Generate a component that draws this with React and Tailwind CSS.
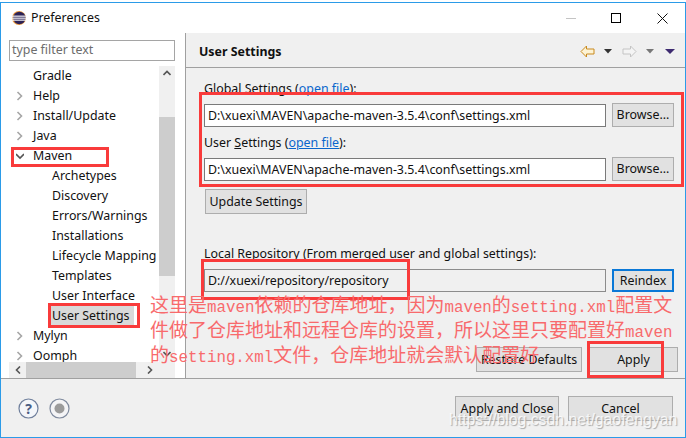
import React from 'react';

const treeTop = [
  { label: 'Gradle', kind: 'none' },
  { label: 'Help', kind: 'closed' },
  { label: 'Install/Update', kind: 'closed' },
  { label: 'Java', kind: 'closed' },
  { label: 'Maven', kind: 'open' },
  { label: 'Archetypes', kind: 'child' },
  { label: 'Discovery', kind: 'child' },
  { label: 'Errors/Warnings', kind: 'child' },
  { label: 'Installations', kind: 'child' },
  { label: 'Lifecycle Mapping', kind: 'child' },
  { label: 'Templates', kind: 'child' },
  { label: 'User Interface', kind: 'child' },
  { label: 'User Settings', kind: 'selected' },
  { label: 'Mylyn', kind: 'closed' },
  { label: 'Oomph', kind: 'closed' },
];

function Chevron({ open }) {
  return (
    <svg width="8" height="10" viewBox="0 0 8 10" className="shrink-0" fill="none">
      {open ? (
        <path d="M0 3l4 4 4-4" stroke="#555" strokeWidth="1.6" />
      ) : (
        <path d="M1.5 1l4 4-4 4" stroke="#a6a6a6" strokeWidth="1.6" />
      )}
    </svg>
  );
}

function TreeRow({ label, kind }) {
  if (kind === 'child' || kind === 'selected') {
    return (
      <div className="h-5 shrink-0 flex items-start pl-[41px]">
        <span className={`h-[19px] leading-[19px] pl-[2px] pr-[5px] whitespace-nowrap ${kind === 'selected' ? 'bg-[#d9d9d9]' : ''}`}>{label}</span>
      </div>
    );
  }
  return (
    <div className="h-5 shrink-0 flex items-center pl-[7px]">
      <span className="w-[16px] flex">{kind !== 'none' && <Chevron open={kind === 'open'} />}</span>
      <span className="pl-[1px] whitespace-nowrap">{label}</span>
    </div>
  );
}

function Btn({ children, className = 'border-[#adadad]' }) {
  return (
    <div className={`flex items-center justify-center pt-px bg-[#e1e1e1] border shrink-0 ${className}`}>{children}</div>
  );
}

function PathField({ value, className = 'bg-white border-[#7a7a7a]' }) {
  return (
    <div className={`h-[23px] flex-1 border pl-[3px] pt-px flex items-center ${className}`}>{value}</div>
  );
}

function Link() {
  return <span className="text-[#0a66cc] underline">open file</span>;
}

function EclipseIcon() {
  return (
    <svg width="14" height="14" viewBox="0 0 14 14">
      <circle cx="7" cy="7" r="7" fill="#e8963a" />
      <circle cx="7.4" cy="7" r="6.2" fill="#2c2255" />
      <rect x="0" y="4.6" width="14" height="1.1" fill="#fff" />
      <rect x="0" y="6.6" width="14" height="1.1" fill="#fff" />
      <rect x="0" y="8.6" width="14" height="1.1" fill="#fff" />
    </svg>
  );
}

function NavArrow({ flip, stroke, fill }) {
  return (
    <svg width="15" height="13" viewBox="0 0 15 13" className={flip ? '-scale-x-100' : ''}>
      <path d="M1 6.5L6.5 1v3h7.5v5H6.5v3z" fill={fill} stroke={stroke} strokeWidth="1" />
    </svg>
  );
}

function Caret({ color, wide }) {
  return (
    <svg width={wide ? 10 : 8} height="5" viewBox={wide ? '0 0 10 5' : '0 0 8 5'}>
      <path d={wide ? 'M0 0h10L5 5z' : 'M0 0h8L4 4.5z'} fill={color} />
    </svg>
  );
}

function RedBox({ className }) {
  return <div className={`absolute border-[3px] border-[#f93b3b] pointer-events-none ${className}`} />;
}

function Latin({ children }) {
  return <span className="text-[15.8px]">{children}</span>;
}

export default function App() {
  return (
    <div className="relative w-[686px] h-[438px] bg-white overflow-hidden pt-[2px] text-[12.4px] text-[#111] font-['Noto_Sans','Liberation_Sans',sans-serif]">
      <div className="h-[436px] border border-[#2b9be8] flex flex-col bg-[#f0f0f0]">
        {/* Title bar */}
        <div className="h-[30px] shrink-0 bg-white flex items-center pl-[11px]">
          <EclipseIcon />
          <span className="ml-[5px]">Preferences</span>
          <div className="ml-auto flex items-center mr-[17px]">
            <div className="w-[10px] h-px bg-[#c4c4c4] mr-[35px]" />
            <div className="w-[10px] h-[10px] border border-black mr-[36px]" />
            <svg width="11" height="11" viewBox="0 0 11 11">
              <path d="M0.5 0.5l10 10M10.5 0.5l-10 10" stroke="#111" strokeWidth="1" />
            </svg>
          </div>
        </div>

        {/* Main */}
        <div className="flex h-[346px] shrink-0 border-b border-[#a0a0a0]">
          <div className="w-[185px] shrink-0 bg-white border-r border-[#a0a0a0] pl-[8px] pr-[10px] pt-[7px] flex flex-col">
            <div className="h-[21px] shrink-0 border border-[#a5a5a5] pl-[2px] flex items-center text-[#6d6d6d]">type filter text</div>
            <div className="mt-[5px] flex h-[296px] shrink-0">
              <div className="flex-1 min-w-0 overflow-hidden flex flex-col">
                {treeTop.map((row) => (
                  <TreeRow key={row.label} label={row.label} kind={row.kind} />
                ))}
              </div>
              <div className="w-[16px] shrink-0 bg-[#f0f0f0] flex flex-col">
                <div className="h-[51px] flex justify-center pt-[4px]">
                  <svg width="8" height="6" viewBox="0 0 8 6" fill="none"><path d="M0.5 5L4 1.5 7.5 5" stroke="#555" strokeWidth="1.6" /></svg>
                </div>
                <div className="h-[159px] bg-[#cdcdcd]" />
                <div className="mt-auto h-[16px] flex items-center justify-center">
                  <svg width="8" height="6" viewBox="0 0 8 6" fill="none"><path d="M0.5 1L4 4.5 7.5 1" stroke="#555" strokeWidth="1.6" /></svg>
                </div>
              </div>
            </div>
            <div className="h-[16px] shrink-0 bg-[#f0f0f0] flex items-center">
              <div className="w-[17px] flex justify-center">
                <svg width="6" height="8" viewBox="0 0 6 8" fill="none"><path d="M5 0.5L1.5 4 5 7.5" stroke="#555" strokeWidth="1.6" /></svg>
              </div>
              <div className="w-[110px] h-full bg-[#cdcdcd]" />
              <div className="w-[28px] flex justify-center">
                <svg width="6" height="8" viewBox="0 0 6 8" fill="none"><path d="M1 0.5L4.5 4 1 7.5" stroke="#555" strokeWidth="1.6" /></svg>
              </div>
            </div>
          </div>

          <div className="flex-1 min-w-0 flex flex-col">
            <div className="h-[35px] shrink-0 border-b border-[#a0a0a0] flex items-center pt-[3px] pl-[13px] pr-[10px]">
              <span className="font-bold pt-[2px]">User Settings</span>
              <div className="ml-auto flex items-center">
                <NavArrow flip={false} stroke="#c98a1e" fill="#fdf3d4" />
                <span className="ml-[9px] flex"><Caret color="#333" /></span>
                <span className="ml-[10px] flex"><NavArrow flip stroke="#c4c4c4" fill="#f4f4f4" /></span>
                <span className="ml-[9px] flex"><Caret color="#777" /></span>
                <span className="ml-[11px] flex"><Caret color="#3d2a70" wide /></span>
              </div>
            </div>

            <div className="flex-1 pl-[18px] pr-[11px] flex flex-col">
              <div className="h-[19px] mt-[12px] flex items-center">
                <span>Global <u>S</u>ettings (<Link />):</span>
              </div>
              <div className="flex gap-[6px] mt-[5px]">
                <PathField value="D:\xuexi\MAVEN\apache-maven-3.5.4\conf\settings.xml" />
                <Btn className="w-[62px] h-[24px] -mt-px border-[#adadad]">Browse...</Btn>
              </div>
              <div className="h-[19px] mt-[7px] flex items-center">
                <span>User <u>S</u>ettings (<Link />):</span>
              </div>
              <div className="flex gap-[6px] mt-[5px]">
                <PathField value="D:\xuexi\MAVEN\apache-maven-3.5.4\conf\settings.xml" />
                <Btn className="w-[62px] h-[24px] -mt-px border-[#adadad]">Browse...</Btn>
              </div>
              <Btn className="w-[102px] h-[25px] mt-[8px] ml-px border-[#adadad]">Update Settings</Btn>
              <div className="h-[19px] mt-[31px] flex items-center">
                <span>Local Repository (From merged user and global settings):</span>
              </div>
              <div className="flex gap-[6px] mt-[5px]">
                <PathField value="D://xuexi/repository/repository" className="bg-[#f0f0f0] border-[#8c8c8c]" />
                <Btn className="w-[62px] h-[23px] border-2 border-[#0a78d7]">Reindex</Btn>
              </div>
              <div className="flex gap-[7px] justify-end mt-[55px] -mr-[4px]">
                <Btn className="w-[106px] h-[25px] border-[#adadad]">Restore Defaults</Btn>
                <Btn className="w-[89px] h-[25px] border-[#adadad]">Apply</Btn>
              </div>
            </div>
          </div>
        </div>

        {/* Footer */}
        <div className="flex-1 flex items-center pt-px pl-[17px] pr-[12px]">
          <svg width="21" height="21" viewBox="0 0 21 21">
            <circle cx="10.5" cy="10.5" r="9.5" fill="#f4f6fa" stroke="#6f7f9c" strokeWidth="1.2" />
            <text x="10.5" y="15.5" textAnchor="middle" fontSize="14" fontWeight="700" fill="#4a5d85">?</text>
          </svg>
          <svg width="21" height="21" viewBox="0 0 21 21" className="ml-[10px]">
            <circle cx="10.5" cy="10.5" r="9.5" fill="#f4f4f6" stroke="#7f8a9e" strokeWidth="1.2" />
            <circle cx="10.5" cy="10.5" r="5" fill="#9b9b9b" />
          </svg>
          <div className="ml-auto flex gap-[9px]">
            <Btn className="w-[104px] h-[25px] border-[#adadad]">Apply and Close</Btn>
            <Btn className="w-[105px] h-[25px] border-[#adadad]">Cancel</Btn>
          </div>
        </div>
      </div>

      {/* Annotations drawn over the screenshot */}
      <RedBox className="left-[199px] top-[92px] w-[485px] h-[95px]" />
      <RedBox className="left-[11px] top-[147px] w-[98px] h-[20px]" />
      <RedBox className="left-[48px] top-[303px] w-[92px] h-[25px]" />
      <RedBox className="left-[201px] top-[259px] w-[209px] h-[41px]" />
      <RedBox className="left-[587px] top-[341px] w-[77px] h-[37px]" />
      <div className="absolute left-[150px] top-[295px] text-[19px] leading-[24px] text-[#f86a6c] font-['Liberation_Mono','Noto_Sans_CJK_SC',monospace]">
        <div className="whitespace-nowrap">这里是<Latin>maven</Latin>依赖的仓库地址，因为<Latin>maven</Latin>的<Latin>setting.xml</Latin>配置文</div>
        <div className="whitespace-nowrap">件做了仓库地址和远程仓库的设置，所以这里只要配置好<Latin>maven</Latin></div>
        <div className="whitespace-nowrap">的<Latin>setting.xml</Latin>文件，仓库地址就会默认配置好</div>
      </div>
      <div className="absolute left-[449px] top-[408px] text-[15.8px] text-white/80 [text-shadow:1px_1px_1px_#a8a8a8] font-['Liberation_Sans',sans-serif]">https://blog.csdn.net/gaofengyan</div>
    </div>
  );
}
